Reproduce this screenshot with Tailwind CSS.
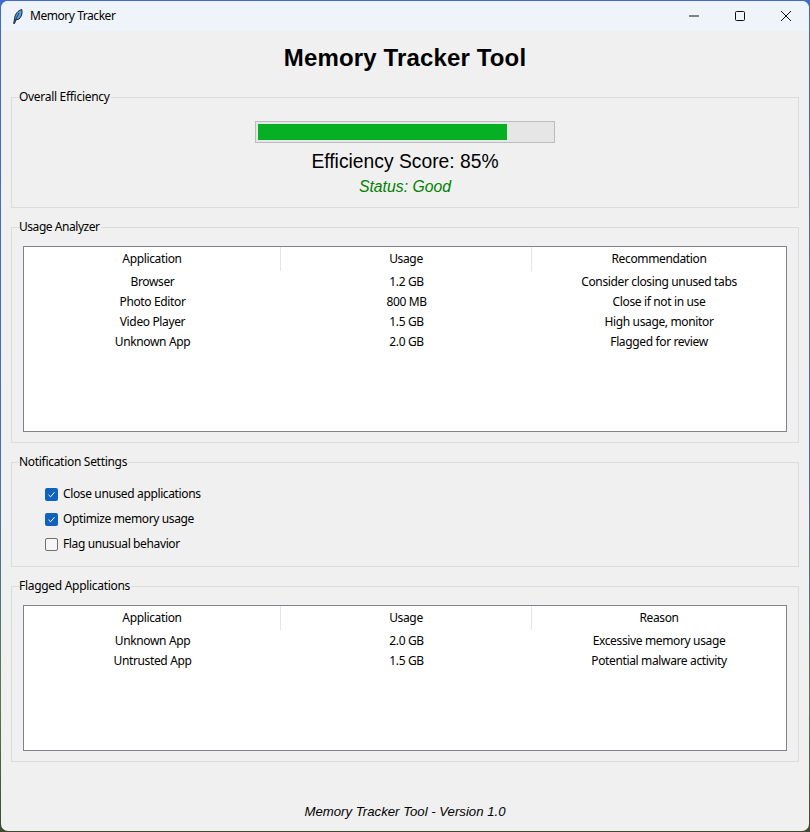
<!DOCTYPE html>
<html>
<head>
<meta charset="utf-8">
<script src="https://cdn.jsdelivr.net/npm/@tailwindcss/browser@4"></script>
</head>
<body class="w-[810px] h-[832px] overflow-hidden bg-[linear-gradient(180deg,#3f6cc8_0%,#4a6db8_55%,#56784a_85%,#3d4a30_100%)] font-['Noto_Sans','Liberation_Sans',sans-serif] text-[12px] text-black">
<div class="h-[832px] pt-px px-px pb-px">
  <div class="h-[830px] bg-[#f0f0f0] rounded-[7px] overflow-hidden flex flex-col">
    <header class="h-[30px] shrink-0 bg-[#eff4fb] flex items-center">
      <svg class="ml-[12px] w-[10px] h-[15px]" viewBox="0 0 10 15"><path d="M0.7 14.5 L1.6 9.5 C2 5 5 1.5 8.8 0.5 C9.6 4 8.5 8 6 10 L3 10.8 L1.5 14.5 Z" fill="#5a9ee0" stroke="#10202e" stroke-width="1"/><path d="M2.4 11 L6 4" stroke="#10202e" stroke-width="0.8"/></svg>
      <span class="ml-[7px] leading-none tracking-[-0.45px]">Memory Tracker</span>
      <div class="ml-auto flex items-center">
        <button class="w-[46px] h-[30px] flex items-center justify-center"><svg class="w-[10px] h-[10px]" viewBox="0 0 10 10"><path d="M0 5H10" stroke="#111" stroke-width="1"/></svg></button>
        <button class="w-[46px] h-[30px] flex items-center justify-center"><svg class="w-[10px] h-[10px]" viewBox="0 0 10 10"><rect x=".5" y=".5" width="9" height="9" rx="1" fill="none" stroke="#111"/></svg></button>
        <button class="w-[46px] h-[30px] flex items-center justify-center"><svg class="w-[10px] h-[10px]" viewBox="0 0 10 10"><path d="M0 0L10 10M10 0L0 10" stroke="#111" stroke-width="1"/></svg></button>
      </div>
    </header>

    <main class="flex-1 flex flex-col px-[10px]">
      <h1 class="h-[66px] shrink-0 flex items-center justify-center font-['Liberation_Sans',sans-serif] font-bold text-[24px] leading-none pb-[13px] tracking-[0.15px]">Memory Tracker Tool</h1>

      <section class="relative h-[111px] shrink-0 border border-[#dcdcdc] flex flex-col items-center">
        <span class="absolute left-[7px] -top-[9px] bg-[#f0f0f0] pr-px leading-[15px] tracking-[-0.3px]">Overall Efficiency</span>
        <div class="mt-[23px] w-[300px] h-[22px] border border-[#bcbcbc] bg-[#e6e6e6] p-[2px]">
          <div class="w-[249px] h-[16px] bg-[#06b025]"></div>
        </div>
        <p class="mt-[8px] font-['Liberation_Sans',sans-serif] text-[19.3px] leading-[22px]">Efficiency Score: 85%</p>
        <p class="mt-[5px] font-['Liberation_Sans',sans-serif] italic text-[15.8px] leading-[18px] text-[#008000]">Status: Good</p>
      </section>

      <section class="relative mt-[19px] h-[216px] shrink-0 border border-[#dcdcdc] px-[11px] pt-[18px]">
        <span class="absolute left-[7px] -top-[9px] bg-[#f0f0f0] pr-px leading-[15px] tracking-[-0.45px]">Usage Analyzer</span>
        <div class="h-[186px] border border-[#82828c] bg-white">
          <div class="grid grid-cols-[257px_251px_1fr] h-[24px] items-center text-center tracking-[-0.36px]">
            <div class="h-full flex items-center justify-center border-r border-[#e5e5e5]">Application</div>
            <div class="h-full flex items-center justify-center border-r border-[#e5e5e5]">Usage</div>
            <div>Recommendation</div>
          </div>
          <div class="grid grid-cols-[257px_251px_1fr] auto-rows-[20px] items-center text-center tracking-[-0.36px] pt-px">
            <div>Browser</div><div>1.2 GB</div><div>Consider closing unused tabs</div>
            <div>Photo Editor</div><div>800 MB</div><div>Close if not in use</div>
            <div>Video Player</div><div>1.5 GB</div><div>High usage, monitor</div>
            <div>Unknown App</div><div>2.0 GB</div><div>Flagged for review</div>
          </div>
        </div>
      </section>

      <section class="relative mt-[19px] h-[105px] shrink-0 border border-[#dcdcdc] pl-[33px] pt-[21px]">
        <span class="absolute left-[7px] -top-[9px] bg-[#f0f0f0] pr-px leading-[15px] tracking-[-0.3px]">Notification Settings</span>
        <div class="flex flex-col gap-[5px] tracking-[-0.37px]">
          <label class="h-[20px] flex items-center gap-[5px]">
            <span class="w-[13px] h-[13px] rounded-[2px] bg-[#0f62be] flex items-center justify-center"><svg class="w-[9px] h-[9px]" viewBox="0 0 9 9"><path d="M1.5 4.8L3.6 6.8L7.5 2.2" fill="none" stroke="#fff" stroke-width="1"/></svg></span>
            <span>Close unused applications</span>
          </label>
          <label class="h-[20px] flex items-center gap-[5px]">
            <span class="w-[13px] h-[13px] rounded-[2px] bg-[#0f62be] flex items-center justify-center"><svg class="w-[9px] h-[9px]" viewBox="0 0 9 9"><path d="M1.5 4.8L3.6 6.8L7.5 2.2" fill="none" stroke="#fff" stroke-width="1"/></svg></span>
            <span>Optimize memory usage</span>
          </label>
          <label class="h-[20px] flex items-center gap-[5px]">
            <span class="w-[13px] h-[13px] rounded-[2px] border border-[#6f6f6f] bg-[#f6f6f6]"></span>
            <span>Flag unusual behavior</span>
          </label>
        </div>
      </section>

      <section class="relative mt-[19px] h-[176px] shrink-0 border border-[#dcdcdc] px-[11px] pt-[18px]">
        <span class="absolute left-[7px] -top-[9px] bg-[#f0f0f0] pr-px leading-[15px] tracking-[-0.3px]">Flagged Applications</span>
        <div class="h-[146px] border border-[#82828c] bg-white">
          <div class="grid grid-cols-[257px_251px_1fr] h-[24px] items-center text-center tracking-[-0.36px]">
            <div class="h-full flex items-center justify-center border-r border-[#e5e5e5]">Application</div>
            <div class="h-full flex items-center justify-center border-r border-[#e5e5e5]">Usage</div>
            <div>Reason</div>
          </div>
          <div class="grid grid-cols-[257px_251px_1fr] auto-rows-[20px] items-center text-center tracking-[-0.36px] pt-px">
            <div>Unknown App</div><div>2.0 GB</div><div>Excessive memory usage</div>
            <div>Untrusted App</div><div>1.5 GB</div><div>Potential malware activity</div>
          </div>
        </div>
      </section>

      <footer class="mt-[41px] text-center font-['Liberation_Sans',sans-serif] italic text-[13.2px] leading-[18px]">Memory Tracker Tool - Version 1.0</footer>
    </main>
  </div>
</div>
</body>
</html>
